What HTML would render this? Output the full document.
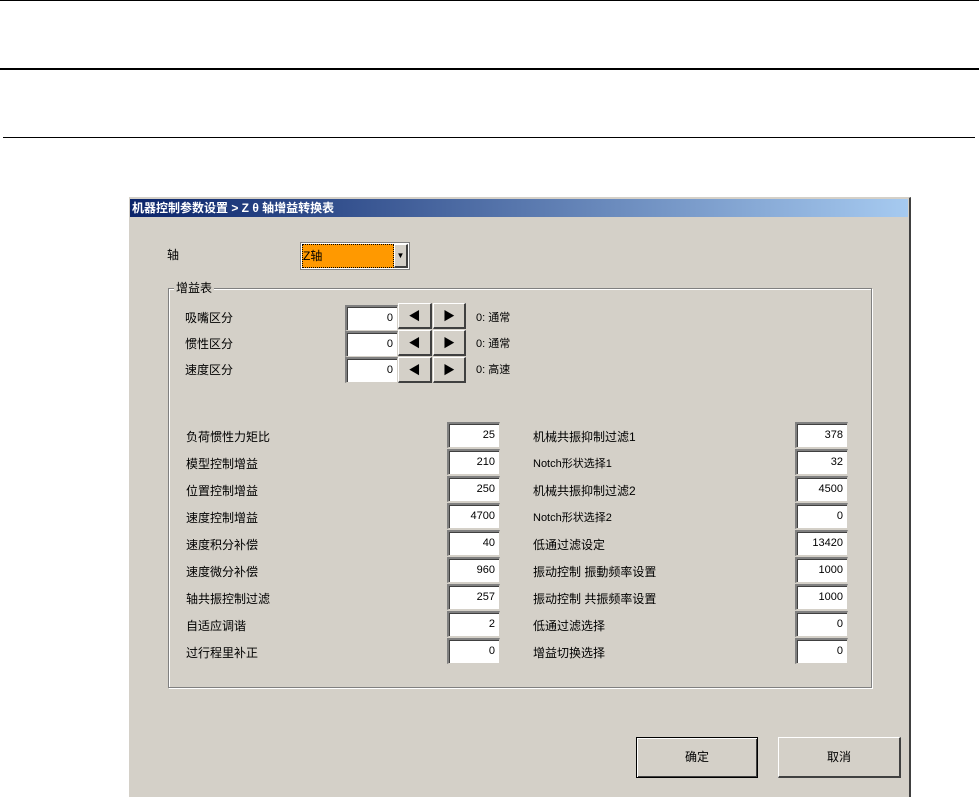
<!DOCTYPE html>
<html><head><meta charset="utf-8"><style>
body{margin:0;width:979px;height:793px;background:#fff;position:relative;overflow:hidden;font-family:"Liberation Sans","Noto Sans CJK SC",sans-serif;font-size:12px;color:#000}
.a{position:absolute}
.inp{position:absolute;background:#fff;border-top:2px solid #808080;border-left:2px solid #808080;border-right:1px solid #d4d0c8;border-bottom:1px solid #d4d0c8;box-sizing:border-box;text-align:right;padding-right:4px;font-size:11px;line-height:22px;box-shadow:inset 1px 1px 0 #404040}
.btn{position:absolute;background:#d4d0c8;box-sizing:border-box;border-top:1px solid #fff;border-left:1px solid #fff;border-right:2px solid #404040;border-bottom:2px solid #404040;text-align:center}
.lbl{position:absolute;font-size:12px;line-height:14px}
</style></head><body>
<div class="a" style="left:0;top:0;width:979px;height:1px;background:#000"></div>
<div class="a" style="left:0;top:68px;width:979px;height:2px;background:#000"></div>
<div class="a" style="left:3px;top:137px;width:972px;height:1px;background:#000"></div>

<div class="a" style="left:129px;top:197px;width:782px;height:600px;background:#d4d0c8;border-right:2px solid #404040;border-top:1px solid #d4d0c8;box-sizing:border-box"></div>
<div class="a" style="left:130px;top:199px;width:778px;height:18px;background:linear-gradient(90deg,#0a246a,#a6caf0)"></div>
<div class="lbl" style="left:132px;top:201px;color:#fff;font-weight:bold">机器控制参数设置 &gt; Z θ 轴增益转换表</div>

<div class="lbl" style="left:167px;top:248px">轴</div>
<div class="a" style="left:300px;top:242px;width:110px;height:28px;background:#fff;border:1px solid #808080;box-sizing:border-box"></div>
<div class="a" style="left:302px;top:244px;width:92px;height:24px;background:#ff9900;border:1px dotted #000;box-sizing:border-box;line-height:22px;font-size:12px">Z轴</div>
<div class="btn" style="left:394px;top:244px;width:14px;height:24px;line-height:22px;font-size:8px">▼</div>

<div class="a" style="left:168px;top:288px;width:704px;height:400px;border:1px solid #808080;box-shadow:1px 1px 0 #fff, inset 1px 1px 0 #fff;box-sizing:border-box"></div>
<div class="lbl" style="left:174px;top:281px;background:#d4d0c8;padding:0 2px">增益表</div>

<div class="lbl" style="left:185px;top:311px">吸嘴区分</div>
<div class="lbl" style="left:185px;top:337px">惯性区分</div>
<div class="lbl" style="left:185px;top:363px">速度区分</div>
<div class="inp" style="left:345px;top:305px;width:53px;height:26px">0</div>
<div class="inp" style="left:345px;top:331px;width:53px;height:26px">0</div>
<div class="inp" style="left:345px;top:357px;width:53px;height:26px">0</div>
<div class="btn" style="left:398px;top:303px;width:34px;height:26px;line-height:24px">◀</div>
<div class="btn" style="left:433px;top:303px;width:33px;height:26px;line-height:24px">▶</div>
<div class="btn" style="left:398px;top:330px;width:34px;height:26px;line-height:24px">◀</div>
<div class="btn" style="left:433px;top:330px;width:33px;height:26px;line-height:24px">▶</div>
<div class="btn" style="left:398px;top:357px;width:34px;height:26px;line-height:24px">◀</div>
<div class="btn" style="left:433px;top:357px;width:33px;height:26px;line-height:24px">▶</div>
<div class="lbl" style="left:476px;top:311px;font-size:11px">0: 通常</div>
<div class="lbl" style="left:476px;top:337px;font-size:11px">0: 通常</div>
<div class="lbl" style="left:476px;top:363px;font-size:11px">0: 高速</div>

<div class="lbl" style="left:186px;top:430px">负荷惯性力矩比</div>
<div class="lbl" style="left:186px;top:457px">模型控制增益</div>
<div class="lbl" style="left:186px;top:484px">位置控制增益</div>
<div class="lbl" style="left:186px;top:511px">速度控制增益</div>
<div class="lbl" style="left:186px;top:538px">速度积分补偿</div>
<div class="lbl" style="left:186px;top:565px">速度微分补偿</div>
<div class="lbl" style="left:186px;top:592px">轴共振控制过滤</div>
<div class="lbl" style="left:186px;top:619px">自适应调谐</div>
<div class="lbl" style="left:186px;top:646px">过行程里补正</div>

<div class="inp" style="left:447px;top:422px;width:53px;height:26px">25</div>
<div class="inp" style="left:447px;top:449px;width:53px;height:26px">210</div>
<div class="inp" style="left:447px;top:476px;width:53px;height:26px">250</div>
<div class="inp" style="left:447px;top:503px;width:53px;height:26px">4700</div>
<div class="inp" style="left:447px;top:530px;width:53px;height:26px">40</div>
<div class="inp" style="left:447px;top:557px;width:53px;height:26px">960</div>
<div class="inp" style="left:447px;top:584px;width:53px;height:26px">257</div>
<div class="inp" style="left:447px;top:611px;width:53px;height:26px">2</div>
<div class="inp" style="left:447px;top:638px;width:53px;height:26px">0</div>

<div class="lbl" style="left:533px;top:430px">机械共振抑制过滤1</div>
<div class="lbl" style="left:533px;top:457px;font-size:11px">Notch形状选择1</div>
<div class="lbl" style="left:533px;top:484px">机械共振抑制过滤2</div>
<div class="lbl" style="left:533px;top:511px;font-size:11px">Notch形状选择2</div>
<div class="lbl" style="left:533px;top:538px">低通过滤设定</div>
<div class="lbl" style="left:533px;top:565px">振动控制 振動频率设置</div>
<div class="lbl" style="left:533px;top:592px">振动控制 共振频率设置</div>
<div class="lbl" style="left:533px;top:619px">低通过滤选择</div>
<div class="lbl" style="left:533px;top:646px">增益切换选择</div>

<div class="inp" style="left:795px;top:422px;width:53px;height:26px">378</div>
<div class="inp" style="left:795px;top:449px;width:53px;height:26px">32</div>
<div class="inp" style="left:795px;top:476px;width:53px;height:26px">4500</div>
<div class="inp" style="left:795px;top:503px;width:53px;height:26px">0</div>
<div class="inp" style="left:795px;top:530px;width:53px;height:26px">13420</div>
<div class="inp" style="left:795px;top:557px;width:53px;height:26px">1000</div>
<div class="inp" style="left:795px;top:584px;width:53px;height:26px">1000</div>
<div class="inp" style="left:795px;top:611px;width:53px;height:26px">0</div>
<div class="inp" style="left:795px;top:638px;width:53px;height:26px">0</div>

<div class="btn" style="left:636px;top:737px;width:122px;height:41px;line-height:38px;border:1px solid #000;box-shadow:inset 1px 1px 0 #fff,inset -1px -1px 0 #404040">确定</div>
<div class="btn" style="left:778px;top:737px;width:123px;height:41px;line-height:38px">取消</div>
</body></html>
